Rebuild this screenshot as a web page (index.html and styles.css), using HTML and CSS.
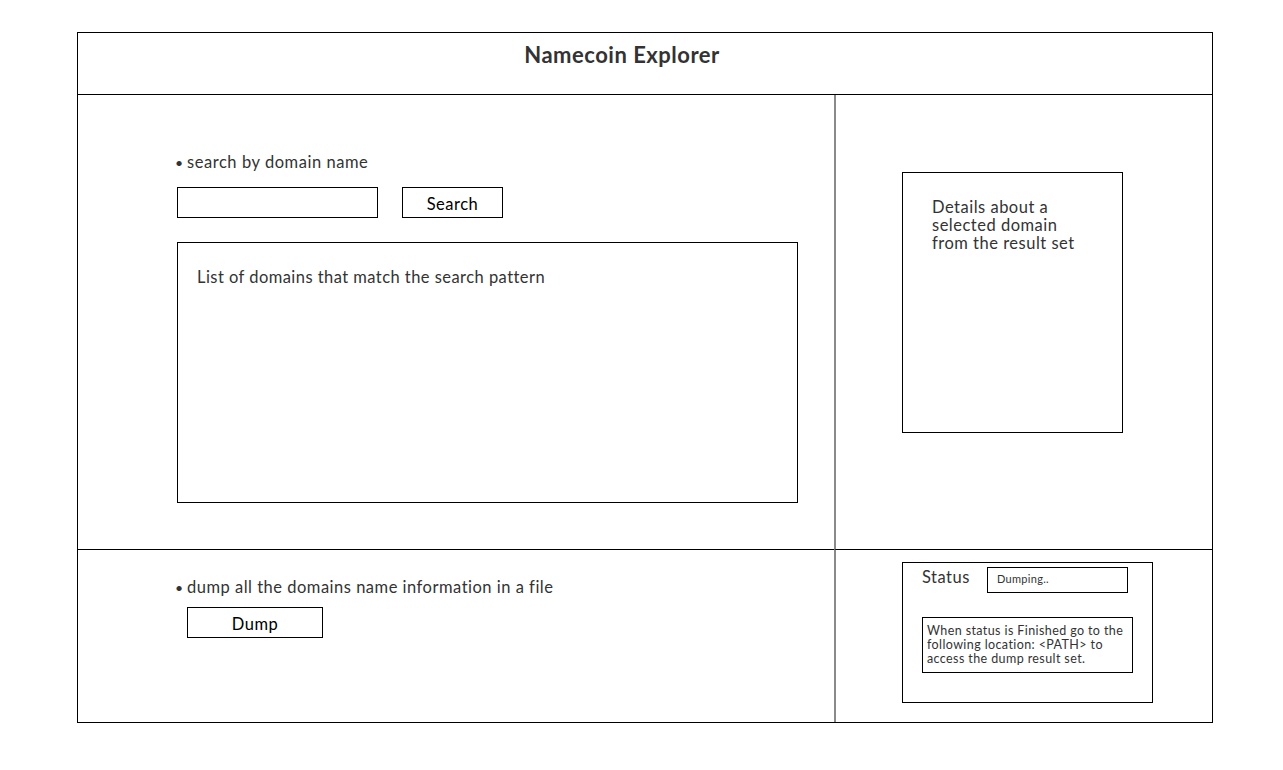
FILE: index.html
```html
<!DOCTYPE html>
<html>
<head>
<meta charset="utf-8">
<title>Namecoin Explorer</title>
<link rel="stylesheet" href="styles.css">
</head>
<body>
<div class="frame">
  <header class="header"><h1 class="title">Namecoin Explorer</h1></header>
  <div class="grid">
    <section class="cell search-cell">
      <div class="bullet-line"><span class="dot">•</span>search by domain name</div>
      <div class="search-row">
        <div class="input"></div>
        <div class="btn search-btn">Search</div>
      </div>
      <div class="results">List of domains that match the search pattern</div>
    </section>
    <section class="cell side details-cell">
      <div class="details">Details about a<br>selected domain<br>from the result set</div>
    </section>
    <section class="cell dump-cell">
      <div class="bullet-line"><span class="dot">•</span>dump all the domains name information in a file</div>
      <div class="btn dump-btn">Dump</div>
    </section>
    <section class="cell side status-cell">
      <div class="status-box">
        <div class="status-row">
          <span class="status-label">Status</span>
          <div class="status-field">Dumping..</div>
        </div>
        <div class="note">When status is Finished go to the<br>following location: &lt;PATH&gt; to<br>access the dump result set.</div>
      </div>
    </section>
  </div>
</div>
</body>
</html>
```

FILE: styles.css
```css
* { box-sizing: border-box; }
body {
  margin: 0;
  background: #fff;
  font-family: "Lato", "Liberation Sans", sans-serif;
  color: #333;
}
.frame {
  margin: 32px 0 0 77px;
  width: 1136px;
  height: 691px;
  border: 1px solid #000;
  display: flex;
  flex-direction: column;
}
.header {
  height: 62px;
  border-bottom: 1px solid #000;
  display: flex;
  align-items: flex-start;
  justify-content: center;
  padding-right: 46px;
}
.title {
  margin: 7px 0 0 0;
  font-size: 22px;
  font-weight: 700;
  letter-spacing: 0.5px;
  line-height: 30px;
  color: #333;
}
.grid {
  flex: 1;
  display: grid;
  grid-template-columns: 756px 1fr;
  grid-template-rows: 455px 1fr;
}
.cell { min-width: 0; }
.side { border-left: 2px solid #8a8a8a; }
.search-cell, .details-cell { border-bottom: 1px solid #000; }
.search-cell { padding: 57px 0 0 97px; }
.bullet-line {
  font-size: 16.5px;
  letter-spacing: 0.55px;
  line-height: 20px;
  white-space: nowrap;
}
.dump-cell .bullet-line { letter-spacing: 0.5px; }
.dot { display: inline-block; width: 12px; font-size: 14px; letter-spacing: 0; }
.search-row {
  display: flex;
  gap: 24px;
  margin: 14px 0 0 2px;
}
.input {
  width: 201px;
  height: 31px;
  border: 1px solid #000;
}
.btn {
  height: 31px;
  border: 1px solid #000;
  color: #000;
  font-size: 16.5px;
  letter-spacing: 0.5px;
  line-height: 29px;
  padding-top: 2px;
  text-align: center;
}
.search-btn { width: 101px; }
.results {
  margin: 24px 0 0 2px;
  width: 621px;
  height: 261px;
  border: 1px solid #000;
  padding: 24px 0 0 19px;
  font-size: 16.5px;
  letter-spacing: 0.45px;
  line-height: 20px;
}
.details-cell { padding: 77px 0 0 66px; }
.details {
  width: 221px;
  height: 261px;
  border: 1px solid #000;
  padding: 25px 0 0 29px;
  font-size: 16.5px;
  letter-spacing: 0.5px;
  line-height: 18px;
}
.dump-cell { padding: 27px 0 0 97px; }
.dump-btn { width: 136px; margin: 9px 0 0 12px; }
.status-cell { padding: 12px 0 0 66px; }
.status-box {
  width: 251px;
  height: 141px;
  border: 1px solid #000;
  padding: 4px 0 0 19px;
}
.status-row { display: flex; align-items: flex-start; }
.status-label {
  font-size: 16.5px;
  letter-spacing: 0.5px;
  line-height: 20px;
  width: 65px;
}
.status-field {
  width: 141px;
  height: 26px;
  border: 1px solid #000;
  font-size: 11px;
  letter-spacing: 0.3px;
  line-height: 22px;
  padding-left: 9px;
}
.note {
  margin-top: 24px;
  width: 211px;
  height: 56px;
  border: 1px solid #000;
  padding: 6px 0 0 4px;
  font-size: 12.5px;
  letter-spacing: 0.4px;
  line-height: 14px;
  white-space: nowrap;
}
```
